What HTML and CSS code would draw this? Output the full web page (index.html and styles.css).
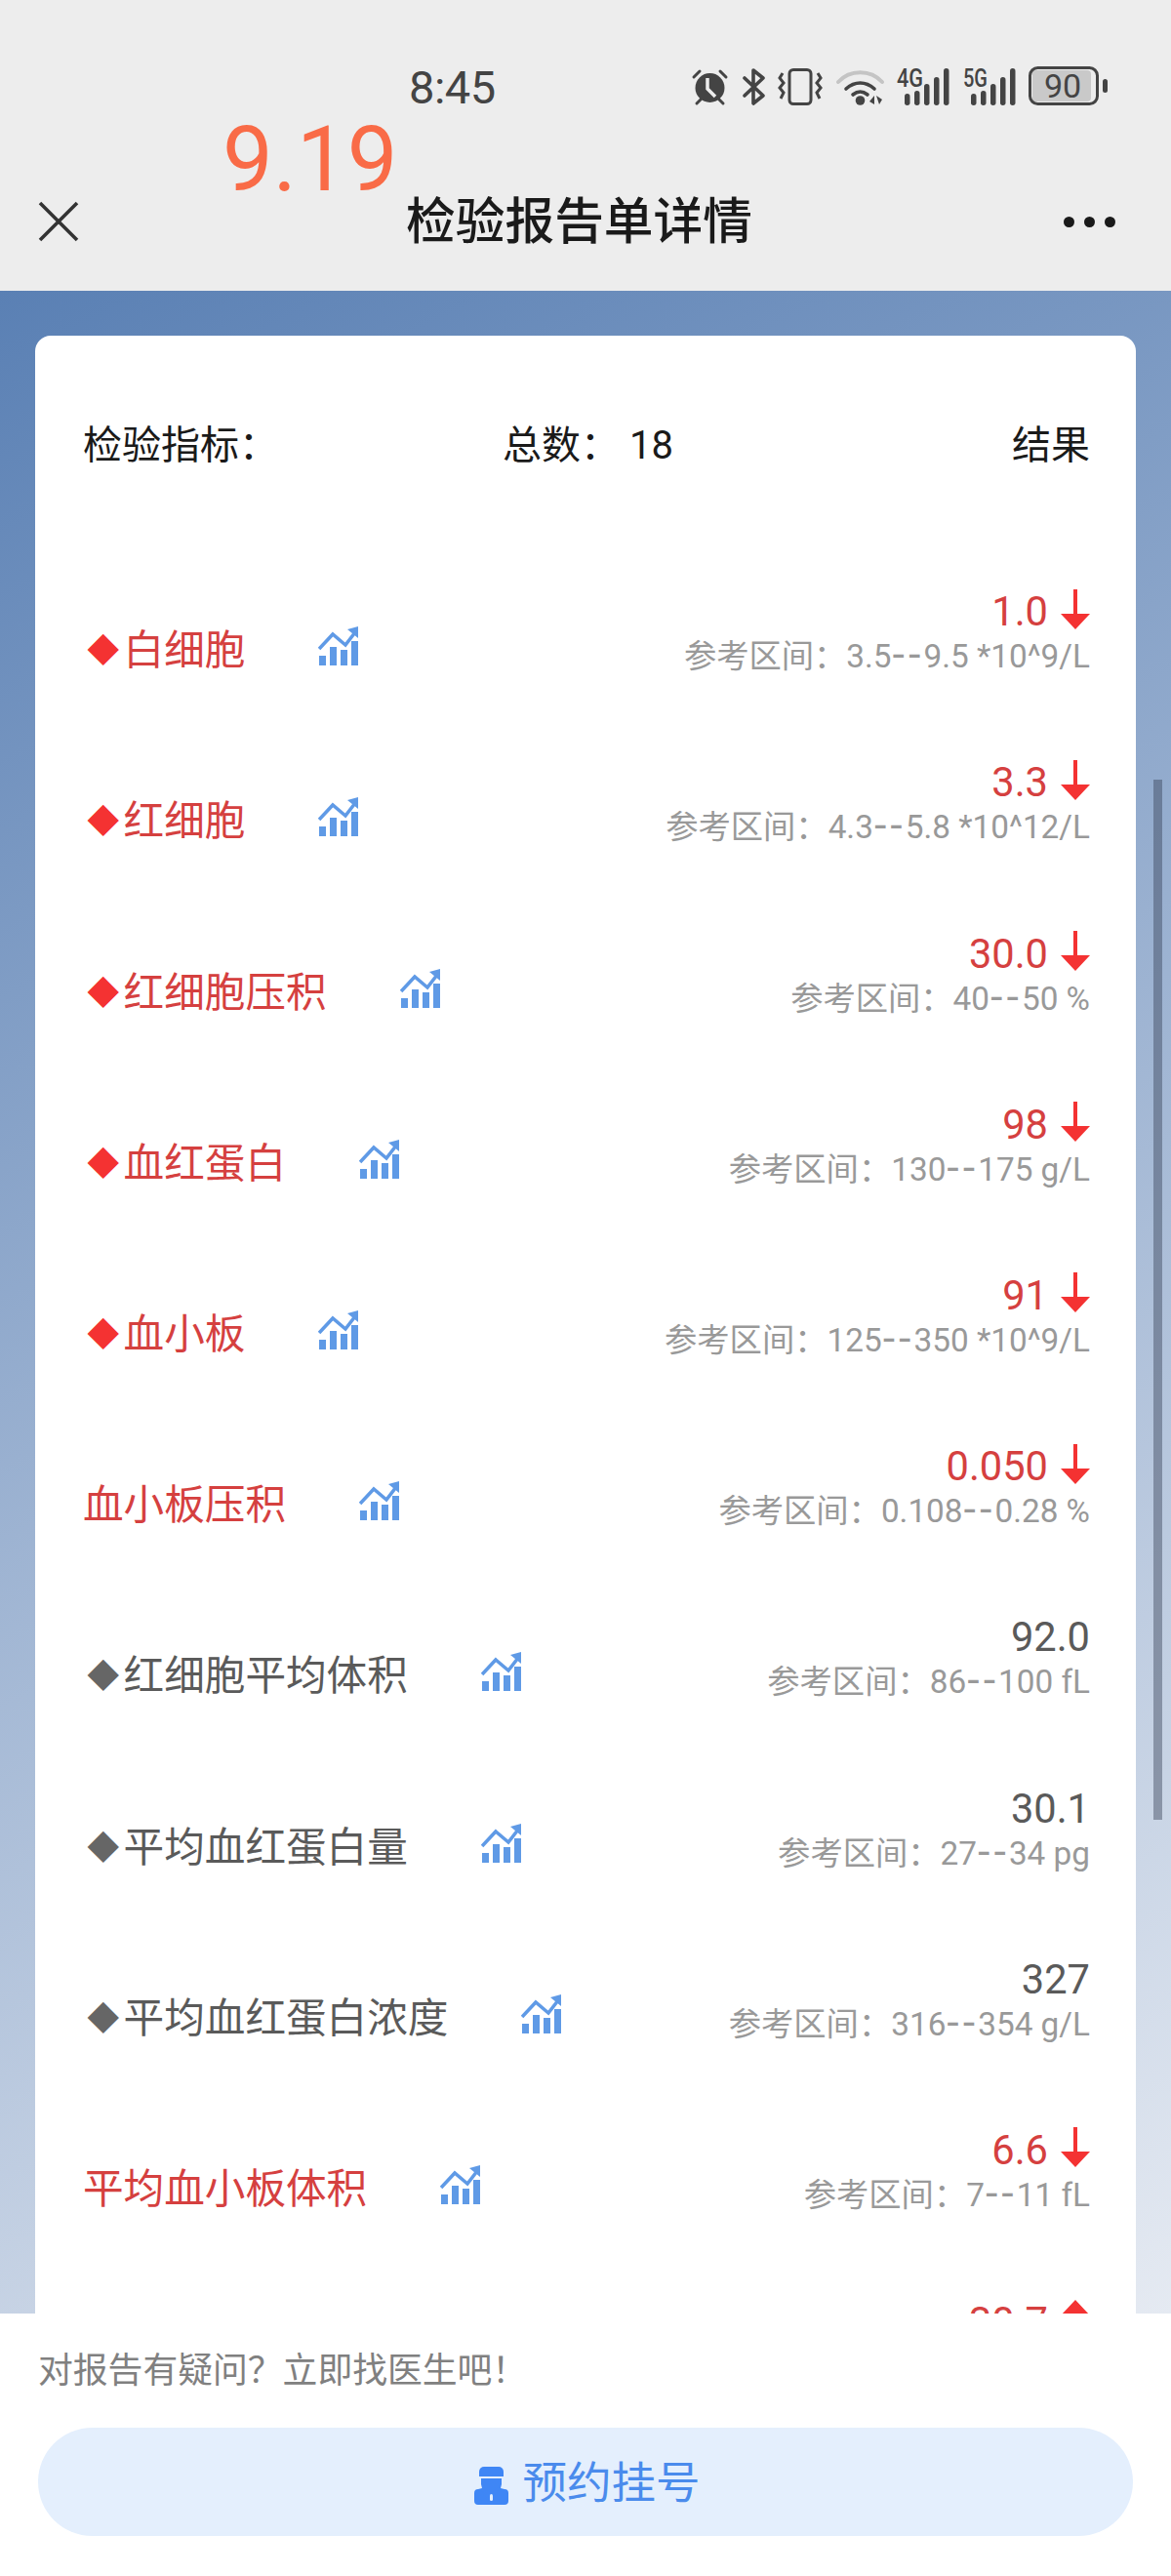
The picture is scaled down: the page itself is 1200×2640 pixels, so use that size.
FILE: index.html
```html
<!DOCTYPE html>
<html lang="zh-CN">
<head>
<meta charset="UTF-8" />
<meta name="viewport" content="width=device-width, initial-scale=1" />
<title>检验报告单详情</title>
<link rel="stylesheet" href="styles.css">
</head>
<body>

<div class="page">

  <!-- annotation written on top of the screenshot -->
  <div class="note">9.19</div>

  <header class="top">
    <div class="status">
      <span class="clock">8:45</span>
      <div class="status-icons">
        <svg class="ic-alarm" viewBox="0 0 39 38">
          <path d="M3 9 9 3M36 9 30 3M6 36l4-4M33 36l-4-4" stroke="#444" stroke-width="3" stroke-linecap="round" fill="none" />
          <circle cx="19.5" cy="20" r="15" fill="#444" />
          <path d="M17 10v11l8 8" stroke="#ededed" stroke-width="3.5" fill="none" />
        </svg>
        <svg class="ic-bt" viewBox="0 0 23 38">
          <path d="M2 10 21 28 11 36V2l10 8L2 28" stroke="#444" stroke-width="3.6" stroke-linejoin="round" stroke-linecap="round" fill="none" />
        </svg>
        <svg class="ic-vib" viewBox="0 0 46 38">
          <rect x="12" y="1.5" width="22" height="35" rx="4" stroke="#444" stroke-width="3" fill="none" />
          <path d="M5 5 2 10l4 5-4 5 4 5-3 6M41 5l3 5-4 5 4 5-4 5 3 6" stroke="#444" stroke-width="3" fill="none" />
        </svg>
        <svg class="ic-wifi" viewBox="0 0 49 38">
          <path d="M2 14C14 1 35 1 47 14" stroke="#c4c4c4" stroke-width="4" stroke-linecap="round" fill="none" />
          <path d="M10 21c9-8 20-8 29 0M17 27c5-4 10-4 15 0" stroke="#444" stroke-width="3.6" stroke-linecap="round" fill="none" />
          <circle cx="24.5" cy="33" r="4.8" fill="#444" />
          <path d="M34 34l5-6v9zM41 28l6 4-3 5z" fill="#444" />
        </svg>
        <svg class="ic-sig" viewBox="0 0 54 38">
          <text x="0" y="19" class="sig-label" textLength="27" lengthAdjust="spacingAndGlyphs">4G</text>
          <g fill="#444">
            <rect x="8" y="26" width="5.5" height="12" rx="2.7" />
            <rect x="18" y="23" width="5.5" height="15" rx="2.7" />
            <rect x="28" y="16" width="5.5" height="22" rx="2.7" />
            <rect x="38" y="9" width="5.5" height="29" rx="2.7" />
            <rect x="48" y="0" width="5.5" height="38" rx="2.7" />
          </g>
        </svg>
        <svg class="ic-sig" viewBox="0 0 54 38">
          <text x="0" y="19" class="sig-label" textLength="25" lengthAdjust="spacingAndGlyphs">5G</text>
          <g fill="#444">
            <rect x="8" y="26" width="5.5" height="12" rx="2.7" />
            <rect x="18" y="23" width="5.5" height="15" rx="2.7" />
            <rect x="28" y="16" width="5.5" height="22" rx="2.7" />
            <rect x="38" y="9" width="5.5" height="29" rx="2.7" />
            <rect x="48" y="0" width="5.5" height="38" rx="2.7" />
          </g>
        </svg>
        <svg class="ic-batt" viewBox="0 0 81 40">
          <rect x="4" y="4" width="60" height="32" rx="4" fill="#c9c9c9" />
          <rect x="1.5" y="1.5" width="69" height="37" rx="8" stroke="#444" stroke-width="3" fill="none" />
          <rect x="76" y="13" width="5" height="14" rx="2.5" fill="#444" />
          <text x="35" y="32" class="batt-label">90</text>
        </svg>
      </div>
    </div>
    <nav class="nav">
      <svg class="close" viewBox="0 0 42 42">
        <path d="M2 2 40 40M40 2 2 40" stroke="#333" stroke-width="3.6" fill="none" />
      </svg>
      <h1 class="title">检验报告单详情</h1>
      <div class="more"><i></i><i></i><i></i></div>
    </nav>
  </header>

  <main class="content">
    <div class="scrollbar"></div>
    <section class="card">
      <div class="card-head">
        <span class="head-name">检验指标：</span>
        <span class="head-total">总数：&nbsp;18</span>
        <span class="head-result">结果</span>
      </div>

      <div class="row low">
        <div class="name"><span class="mark">◆</span>白细胞<svg class="trend"><use href="#trend" /></svg></div>
        <div class="result">
          <div class="value">1.0<svg class="arrow"><use href="#arrow" /></svg></div>
          <div class="range">参考区间：3.5<span class="dash">--</span>9.5 *10^9/L</div>
        </div>
      </div>
      <div class="row low">
        <div class="name"><span class="mark">◆</span>红细胞<svg class="trend"><use href="#trend" /></svg></div>
        <div class="result">
          <div class="value">3.3<svg class="arrow"><use href="#arrow" /></svg></div>
          <div class="range">参考区间：4.3<span class="dash">--</span>5.8 *10^12/L</div>
        </div>
      </div>
      <div class="row low">
        <div class="name"><span class="mark">◆</span>红细胞压积<svg class="trend"><use href="#trend" /></svg></div>
        <div class="result">
          <div class="value">30.0<svg class="arrow"><use href="#arrow" /></svg></div>
          <div class="range">参考区间：40<span class="dash">--</span>50 %</div>
        </div>
      </div>
      <div class="row low">
        <div class="name"><span class="mark">◆</span>血红蛋白<svg class="trend"><use href="#trend" /></svg></div>
        <div class="result">
          <div class="value">98<svg class="arrow"><use href="#arrow" /></svg></div>
          <div class="range">参考区间：130<span class="dash">--</span>175 g/L</div>
        </div>
      </div>
      <div class="row low">
        <div class="name"><span class="mark">◆</span>血小板<svg class="trend"><use href="#trend" /></svg></div>
        <div class="result">
          <div class="value">91<svg class="arrow"><use href="#arrow" /></svg></div>
          <div class="range">参考区间：125<span class="dash">--</span>350 *10^9/L</div>
        </div>
      </div>
      <div class="row low">
        <div class="name">血小板压积<svg class="trend"><use href="#trend" /></svg></div>
        <div class="result">
          <div class="value">0.050<svg class="arrow"><use href="#arrow" /></svg></div>
          <div class="range">参考区间：0.108<span class="dash">--</span>0.28 %</div>
        </div>
      </div>
      <div class="row">
        <div class="name"><span class="mark">◆</span>红细胞平均体积<svg class="trend"><use href="#trend" /></svg></div>
        <div class="result">
          <div class="value">92.0</div>
          <div class="range">参考区间：86<span class="dash">--</span>100 fL</div>
        </div>
      </div>
      <div class="row">
        <div class="name"><span class="mark">◆</span>平均血红蛋白量<svg class="trend"><use href="#trend" /></svg></div>
        <div class="result">
          <div class="value">30.1</div>
          <div class="range">参考区间：27<span class="dash">--</span>34 pg</div>
        </div>
      </div>
      <div class="row">
        <div class="name"><span class="mark">◆</span>平均血红蛋白浓度<svg class="trend"><use href="#trend" /></svg></div>
        <div class="result">
          <div class="value">327</div>
          <div class="range">参考区间：316<span class="dash">--</span>354 g/L</div>
        </div>
      </div>
      <div class="row low">
        <div class="name">平均血小板体积<svg class="trend"><use href="#trend" /></svg></div>
        <div class="result">
          <div class="value">6.6<svg class="arrow"><use href="#arrow" /></svg></div>
          <div class="range">参考区间：7<span class="dash">--</span>11 fL</div>
        </div>
      </div>
      <!-- only the top of this row shows above the footer -->
      <div class="row low">
        <div class="name"></div>
        <div class="result cut">
          <div class="value">30.7<svg class="arrow up"><use href="#arrow" /></svg></div>
        </div>
      </div>
    </section>
  </main>

  <footer class="bottom">
    <p class="ask">对报告有疑问？立即找医生吧！</p>
    <button class="book">
      <svg class="doctor" viewBox="0 0 35 39">
        <path d="M5 5a5 5 0 0 1 5-5h15a5 5 0 0 1 5 5v5H5z" fill="#3f86f5" />
        <path d="M7 12h21v6l-1 4 4 1a4 4 0 0 1 4 4v8a4 4 0 0 1-4 4H4a4 4 0 0 1-4-4v-8a4 4 0 0 1 4-4l4-1-1-4z" fill="#3f86f5" />
        <rect x="16" y="28" width="3" height="7" rx="1.5" fill="#e4effd" />
      </svg>
      预约挂号
    </button>
  </footer>
</div>

<!-- shared icons -->
<svg class="defs" width="0" height="0">
  <symbol id="trend" viewBox="0 0 41 40">
    <path d="M1 30h7v10H1zM12 21h7v19h-7zM23 24h7v16h-7zM34 15h7v25h-7z" fill="#5f9ae6" />
    <path d="M1 23 15 8l13 11 10-13" stroke="#5f9ae6" stroke-width="3.6" fill="none" />
    <path d="M41 0v12L30 3z" fill="#5f9ae6" />
  </symbol>
  <symbol id="arrow" viewBox="0 0 30 41">
    <path d="M13 0h4v25h13L15 41 0 25h13z" fill="#f43232" />
  </symbol>
</svg>

</body>
</html>
```

FILE: styles.css
```css
* {
  box-sizing: border-box;
}
html, body {
  margin: 0;
  padding: 0;
}
body {
  font-family: Roboto, "Noto Sans CJK SC", sans-serif;
  background: #fff;
}
.page {
  position: relative;
  width: 1200px;
  height: 2640px;
  overflow: hidden;
  display: flex;
  flex-direction: column;
}
.note {
  position: absolute;
  left: 228px;
  top: 104px;
  z-index: 5;
  font-size: 92px;
  line-height: 120px;
  color: #f96b47;
}
.defs {
  position: absolute;
}

/* Header */
.top {
  height: 298px;
  flex: none;
  background: #ededed;
}
.status {
  height: 178px;
  padding: 62px 65px 0 419px;
  display: flex;
  align-items: flex-start;
  justify-content: space-between;
}
.clock {
  font-size: 47px;
  line-height: 56px;
  letter-spacing: -.5px;
  color: #444;
}
.status-icons {
  display: flex;
  gap: 13.5px;
  padding-top: 8px;
}
.status-icons svg {
  height: 38px;
  display: block;
  overflow: visible;
}
.ic-alarm { width: 39px; }
.ic-bt { width: 23px; }
.ic-vib { width: 46px; }
.ic-wifi { width: 49px; }
.ic-sig { width: 54px; }
.status-icons .ic-batt {
  width: 81px;
  height: 40px;
  margin-top: -2px;
}
.sig-label {
  font-size: 25px;
  font-weight: 500;
  fill: #444;
}
.batt-label {
  font-size: 34px;
  fill: #444;
  text-anchor: middle;
}
.nav {
  display: flex;
  align-items: center;
  justify-content: space-between;
  padding: 0 57px 0 39px;
  margin-top: 21px;
  height: 56px;
}
.close {
  width: 42px;
  height: 42px;
}
.title {
  margin: 2px 0 0 16px;
  font-size: 50.7px;
  font-weight: 500;
  color: #1a1a1a;
  line-height: 56px;
}
.more {
  display: flex;
  gap: 10px;
}
.more i {
  display: block;
  width: 11px;
  height: 11px;
  border-radius: 50%;
  background: #1a1a1a;
}

/* Content */
.content {
  position: relative;
  flex: 1 1 auto;
  min-height: 0;
  overflow: hidden;
  padding: 46px 36px 0;
  background: linear-gradient(154deg, #5a80b4 0%, #e5eaf2 100%);
}
.scrollbar {
  position: absolute;
  right: 9px;
  top: 501px;
  width: 9px;
  height: 1066px;
  background: rgba(50, 60, 80, .42);
}
.card {
  background: #fff;
  border-radius: 16px 16px 0 0;
  padding: 0 47px 0 49px;
}
.card-head {
  display: grid;
  grid-template-columns: 430px 1fr auto;
  height: 176px;
  padding-top: 88px;
  font-size: 40px;
  line-height: 50px;
  color: #1a1a1a;
}
.row {
  display: flex;
  justify-content: space-between;
  align-items: flex-end;
  height: 175.2px;
  color: #5a5a5a;
}
.row.low {
  color: #d5403f;
}
.name {
  display: flex;
  align-items: center;
  font-size: 41.6px;
  line-height: 56px;
}
.mark {
  width: 41.6px;
  text-align: center;
  font-size: 33px;
  color: #666;
}
.low .mark {
  color: #f43232;
}
.trend {
  width: 41px;
  height: 40px;
  margin-left: 75px;
  margin-top: -10px;
}
.result {
  display: flex;
  flex-direction: column;
  align-items: flex-end;
}
.result.cut {
  padding-bottom: 44px;
}
.value {
  display: flex;
  align-items: center;
  font-size: 41.6px;
  line-height: 46px;
}
.arrow {
  width: 30px;
  height: 41px;
  margin-left: 13px;
  margin-top: -6px;
}
.arrow.up {
  transform: rotate(180deg);
}
.range {
  font-size: 33.3px;
  line-height: 44px;
  color: #999;
}
/* the reference has much longer hyphens than Roboto */
.dash {
  font-family: "DejaVu Sans", sans-serif;
  font-size: 40px;
  line-height: 1;
  letter-spacing: 2px;
}

/* Footer */
.bottom {
  flex: none;
  height: 269px;
  background: #fff;
  padding: 0 39px;
}
.ask {
  margin: 0;
  padding-top: 36px;
  font-size: 35.8px;
  line-height: 46px;
  color: #808080;
}
.book {
  display: flex;
  align-items: center;
  justify-content: center;
  gap: 14px;
  width: 100%;
  height: 111px;
  margin-top: 35px;
  padding: 0 0 6px 4px;
  border: none;
  border-radius: 56px;
  background: #e4effd;
  color: #4a8bec;
  font-family: inherit;
  font-size: 45.5px;
}
.doctor {
  width: 35px;
  height: 39px;
  margin-top: 14px;
}
```
